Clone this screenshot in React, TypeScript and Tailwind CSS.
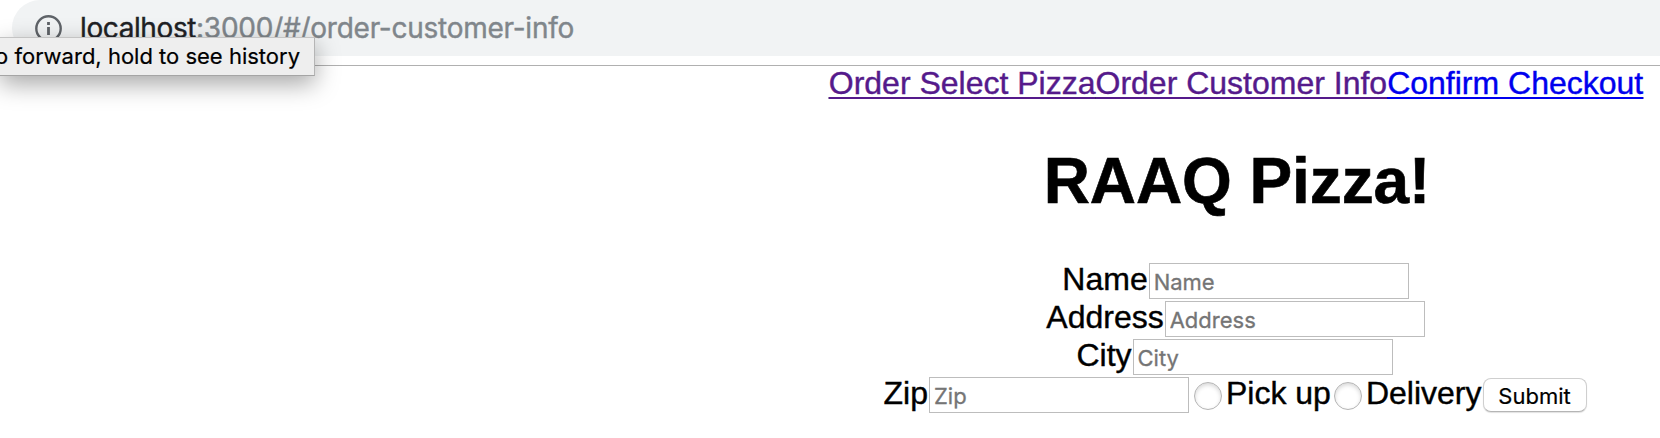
import React from 'react';

const textInput =
  "h-[36px] w-[260px] shrink-0 rounded-none border border-[#bdbdbd] bg-white pl-[4px] pt-[1px] font-[Inter,sans-serif] text-[22px] leading-[30px] text-black outline-none [-webkit-text-stroke:0.3px_#757575] placeholder:text-[#757575] placeholder:opacity-100";

const radio =
  "h-[28px] w-[28px] shrink-0 appearance-none rounded-full border border-[#b4b4b4] bg-white shadow-[inset_0_2px_4px_rgba(0,0,0,0.16)]";

function Field({ label }: { label: string }) {
  return (
    <div className="flex h-[38px] justify-center">
      <label className="flex">
        <span className="-ml-px mr-px leading-[32px]">{label}</span>
        <input type="text" placeholder={label} className={textInput} />
      </label>
    </div>
  );
}

function AddressBar() {
  return (
    <header className="relative h-[66px] border-b border-[#b0b0b0] bg-white pl-[12px]">
      <div className="flex h-[56px] items-start rounded-l-[28px] bg-[#f1f3f4] pl-[23px]">
        <svg className="mt-[15px] h-[27px] w-[27px] shrink-0" viewBox="0 0 27 27" fill="none">
          <circle cx="13.5" cy="13.5" r="12.2" stroke="#5f6368" strokeWidth="2.4" />
          <path d="M13.5 7v3M13.5 12v8" stroke="#5f6368" strokeWidth="2.8" />
        </svg>
        <span className="ml-[18px] mt-[10px] whitespace-nowrap font-[Inter,sans-serif] text-[28px] leading-[36px] tracking-[-0.25px] text-[#80868b] [-webkit-text-stroke:0.4px_currentColor]">
          <span className="tracking-[-0.4px] text-[#202124]">localhost</span>:3000/#/order-customer-info
        </span>
      </div>
      <div
        role="tooltip"
        className="absolute left-0 top-[37px] flex h-[39px] w-[315px] justify-end whitespace-nowrap border-b border-r border-t border-b-[#a5a5a5] border-r-[#b5b5b5] border-t-[#c4c4c4] bg-[#eeeeee] pr-[14px] font-[Inter,sans-serif] text-[22px] leading-[37px] text-black shadow-[0_8px_24px_rgba(0,0,0,0.35)] [-webkit-text-stroke:0.2px_currentColor]"
      >
        o forward, hold to see history
      </div>
    </header>
  );
}

export default function App() {
  return (
    <div className="h-[438px] w-[1660px] overflow-hidden bg-white font-['Liberation_Sans',Arial,sans-serif] text-[32px] text-black">
      <AddressBar />
      <main className="ml-[812px] w-[848px]">
        <nav className="flex h-[36px] justify-center whitespace-nowrap leading-[34px] underline decoration-2 underline-offset-[3px] [-webkit-text-stroke:0.4px_currentColor]">
          <a href="#/" className="text-[#551a8b] [-webkit-text-stroke:0.4px_#551a8b]">Order Select Pizza</a>
          <a href="#/order-customer-info" className="text-[#551a8b] [-webkit-text-stroke:0.4px_#551a8b]">Order Customer Info</a>
          <a href="#/confirm" className="text-[#0000ee] [-webkit-text-stroke:0.4px_#0000ee]">Confirm Checkout</a>
        </nav>
        <h1 className="mt-[42px] h-[75px] pl-[2px] text-center text-[64px] font-bold leading-[74px] tracking-[-0.1px] [-webkit-text-stroke:0.6px_black]">RAAQ Pizza!</h1>
        <form className="mt-[44px] [-webkit-text-stroke:0.4px_black]" onSubmit={(e) => e.preventDefault()}>
          <Field label="Name" />
          <Field label="Address" />
          <div className="-ml-px mr-px">
            <Field label="City" />
          </div>
          <div className="flex h-[38px] justify-center whitespace-nowrap">
            <label className="flex">
              <span className="-ml-px mr-px leading-[32px]">Zip</span>
              <input type="text" placeholder="Zip" className={textInput} />
            </label>
            <label className="ml-[5px] flex">
              <input type="radio" name="method" className={`${radio} mt-[5px]`} />
              <span className="ml-[4px] leading-[32px]">Pick up</span>
            </label>
            <label className="ml-[3px] flex">
              <input type="radio" name="method" className={`${radio} mt-[5px]`} />
              <span className="ml-[4px] mr-[2px] leading-[32px]">Delivery</span>
            </label>
            <button
              type="submit"
              className="mt-[1px] h-[34px] w-[104px] shrink-0 rounded-[8px] border border-[#cfcfcf] border-b-[#b5b5b5] bg-white pr-[2px] pt-[1px] font-[Inter,sans-serif] text-[22px] leading-[32px] shadow-[0_1px_1px_rgba(0,0,0,0.12)] [-webkit-text-stroke:0.2px_black]"
            >
              Submit
            </button>
          </div>
        </form>
      </main>
    </div>
  );
}
